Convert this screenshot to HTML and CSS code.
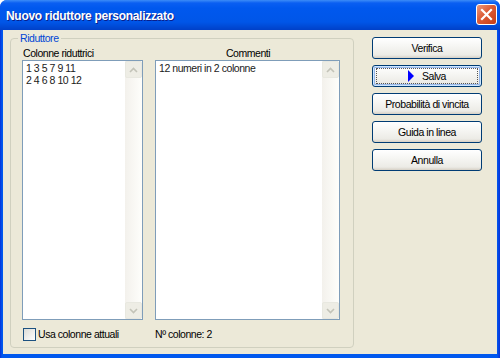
FILE: index.html
```html
<!DOCTYPE html>
<html>
<head>
  <meta name="viewport" content="width=device-width, initial-scale=1.0">
  <link rel="stylesheet" href="styles.css">
</head>
<body>
  <div class="window">
    <div class="titlebar">
      <span class="title">Nuovo riduttore personalizzato</span>
      <span class="close">
        <svg width="21" height="21" viewBox="0 0 21 21">
          <path d="M6 6 L15 15 M15 6 L6 15" stroke="#fff" stroke-width="2.2" stroke-linecap="square"/>
        </svg>
      </span>
    </div>
    <div class="client">
      <fieldset class="group">
        <legend>Riduttore</legend>
        <div class="group_body">
          <div class="col col_left">
            <div class="label">Colonne riduttrici</div>
            <div class="listbox">
              <div class="list_text">1 3 5 7 9 11<br>2 4 6 8 10 12</div>
              <div class="scrollbar">
                <div class="sb_btn">
                  <svg width="9" height="6" viewBox="0 0 9 6"><path d="M1 5 L4.5 1.5 L8 5" fill="none" stroke="#c3c3b8" stroke-width="1.6"/></svg>
                </div>
                <div class="sb_track"></div>
                <div class="sb_btn">
                  <svg width="9" height="6" viewBox="0 0 9 6"><path d="M1 1 L4.5 4.5 L8 1" fill="none" stroke="#c3c3b8" stroke-width="1.6"/></svg>
                </div>
              </div>
            </div>
            <div class="bottom_row">
              <span class="checkbox"></span>
              <span>Usa colonne attuali</span>
            </div>
          </div>
          <div class="col col_right">
            <div class="label centered">Commenti</div>
            <div class="listbox">
              <div class="list_text">12 numeri in 2 colonne</div>
              <div class="scrollbar">
                <div class="sb_btn">
                  <svg width="9" height="6" viewBox="0 0 9 6"><path d="M1 5 L4.5 1.5 L8 5" fill="none" stroke="#c3c3b8" stroke-width="1.6"/></svg>
                </div>
                <div class="sb_track"></div>
                <div class="sb_btn">
                  <svg width="9" height="6" viewBox="0 0 9 6"><path d="M1 1 L4.5 4.5 L8 1" fill="none" stroke="#c3c3b8" stroke-width="1.6"/></svg>
                </div>
              </div>
            </div>
            <div class="bottom_row">Nº colonne: 2</div>
          </div>
        </div>
      </fieldset>
      <div class="buttons">
        <div class="xp_button">Verifica</div>
        <div class="xp_button focused">
          <span class="focus_ring">
            <svg width="6" height="12" viewBox="0 0 6 12"><path d="M0 0 L6 6 L0 12 Z" fill="#0000ff"/></svg>
            <span>Salva</span>
          </span>
        </div>
        <div class="xp_button">Probabilità di vincita</div>
        <div class="xp_button">Guida in linea</div>
        <div class="xp_button">Annulla</div>
      </div>
    </div>
  </div>
</body>
</html>
```

FILE: styles.css
```css
body {
  margin: 0;
  background-color: #ffffff;
  font-family: "Liberation Sans", Arial, sans-serif;
  font-size: 10.5px;
  letter-spacing: -0.45px;
  color: #000000;
}
.window {
  width: 500px;
  height: 358px;
  display: flex;
  flex-direction: column;
  background: linear-gradient(to right, #0831d9 0px, #0058ee 2px, #0058ee 497px, #0831d9 500px);
  border-radius: 7px 7px 0 0;
  overflow: hidden;
}
.titlebar {
  height: 30px;
  display: flex;
  align-items: center;
  justify-content: space-between;
  padding: 0 3px 0 6px;
  background: linear-gradient(to bottom, #3c8cf7 0px, #0a5ff2 3px, #0058ee 8px, #0056e8 22px, #0046d0 28px, #0040c8 30px);
}
.title {
  color: #ffffff;
  font-weight: bold;
  font-size: 12px;
  letter-spacing: -0.3px;
  text-shadow: 1px 1px 0 #0a1e8a;
  margin-top: 1px;
}
.close {
  width: 21px;
  height: 21px;
  box-sizing: border-box;
  border: 1px solid #ffffff;
  border-radius: 3px;
  background: linear-gradient(135deg, #eb9a7e 0%, #dc5b36 45%, #c63d16 100%);
  display: flex;
  margin-top: -1px;
}
.close svg {
  display: block;
  margin: -1px;
}
.client {
  flex: 1;
  margin: 0 3px 4px 3px;
  background-color: #ece9d8;
  display: flex;
  align-items: flex-start;
  padding-left: 7px;
}
.group {
  width: 344px;
  height: 316px;
  box-sizing: border-box;
  margin: 2px 0 0 0;
  padding: 1px 0 0 0;
  border: 1px solid #d0d0bf;
  border-radius: 4px;
}
.group legend {
  margin-left: 7px;
  padding: 0 2px;
  line-height: 13px;
  color: #0046d5;
}
.group_body {
  display: flex;
  gap: 12px;
  padding-left: 11px;
}
.col {
  display: flex;
  flex-direction: column;
}
.col_left {
  width: 121px;
}
.col_right {
  width: 185px;
}
.label {
  height: 14px;
  line-height: 14px;
  padding-left: 1px;
}
.centered {
  text-align: center;
}
.listbox {
  height: 260px;
  box-sizing: border-box;
  border: 1px solid #7f9db9;
  background-color: #ffffff;
  display: flex;
}
.list_text {
  flex: 1;
  padding: 1px 3px;
  line-height: 12px;
  color: #1a1a1a;
}
.scrollbar {
  width: 17px;
  display: flex;
  flex-direction: column;
  background: linear-gradient(to right, #f3f1ec, #fefefb);
}
.sb_btn {
  height: 17px;
  box-sizing: border-box;
  border: 1px solid #e8e8e0;
  border-radius: 2px;
  background-color: #eeede5;
  display: flex;
  align-items: center;
  justify-content: center;
}
.sb_track {
  flex: 1;
}
.bottom_row {
  margin-top: 7px;
  height: 14px;
  line-height: 14px;
  display: flex;
  align-items: center;
  gap: 2px;
}
.col_left .bottom_row {
  padding-left: 1px;
}
.checkbox {
  width: 13px;
  height: 13px;
  box-sizing: border-box;
  border: 1px solid #1c5180;
  background: linear-gradient(135deg, #dcdcd7, #ffffff);
}
.buttons {
  margin: 7px 0 0 18px;
  display: flex;
  flex-direction: column;
  gap: 6px;
}
.xp_button {
  width: 110px;
  height: 22px;
  box-sizing: border-box;
  border: 1px solid #003c74;
  border-radius: 3px;
  background: linear-gradient(to bottom, #ffffff 0%, #f6f6f3 40%, #ecebe6 85%, #d6d0c5 100%);
  display: flex;
  align-items: center;
  justify-content: center;
}
.focused {
  box-shadow: inset 0 0 0 1px #cee7ff, inset 0 0 0 2px #98b8ea;
}
.focus_ring {
  width: 102px;
  height: 16px;
  box-sizing: border-box;
  border: 1px dotted #555555;
  display: flex;
  align-items: center;
  justify-content: center;
  gap: 8px;
}
```
